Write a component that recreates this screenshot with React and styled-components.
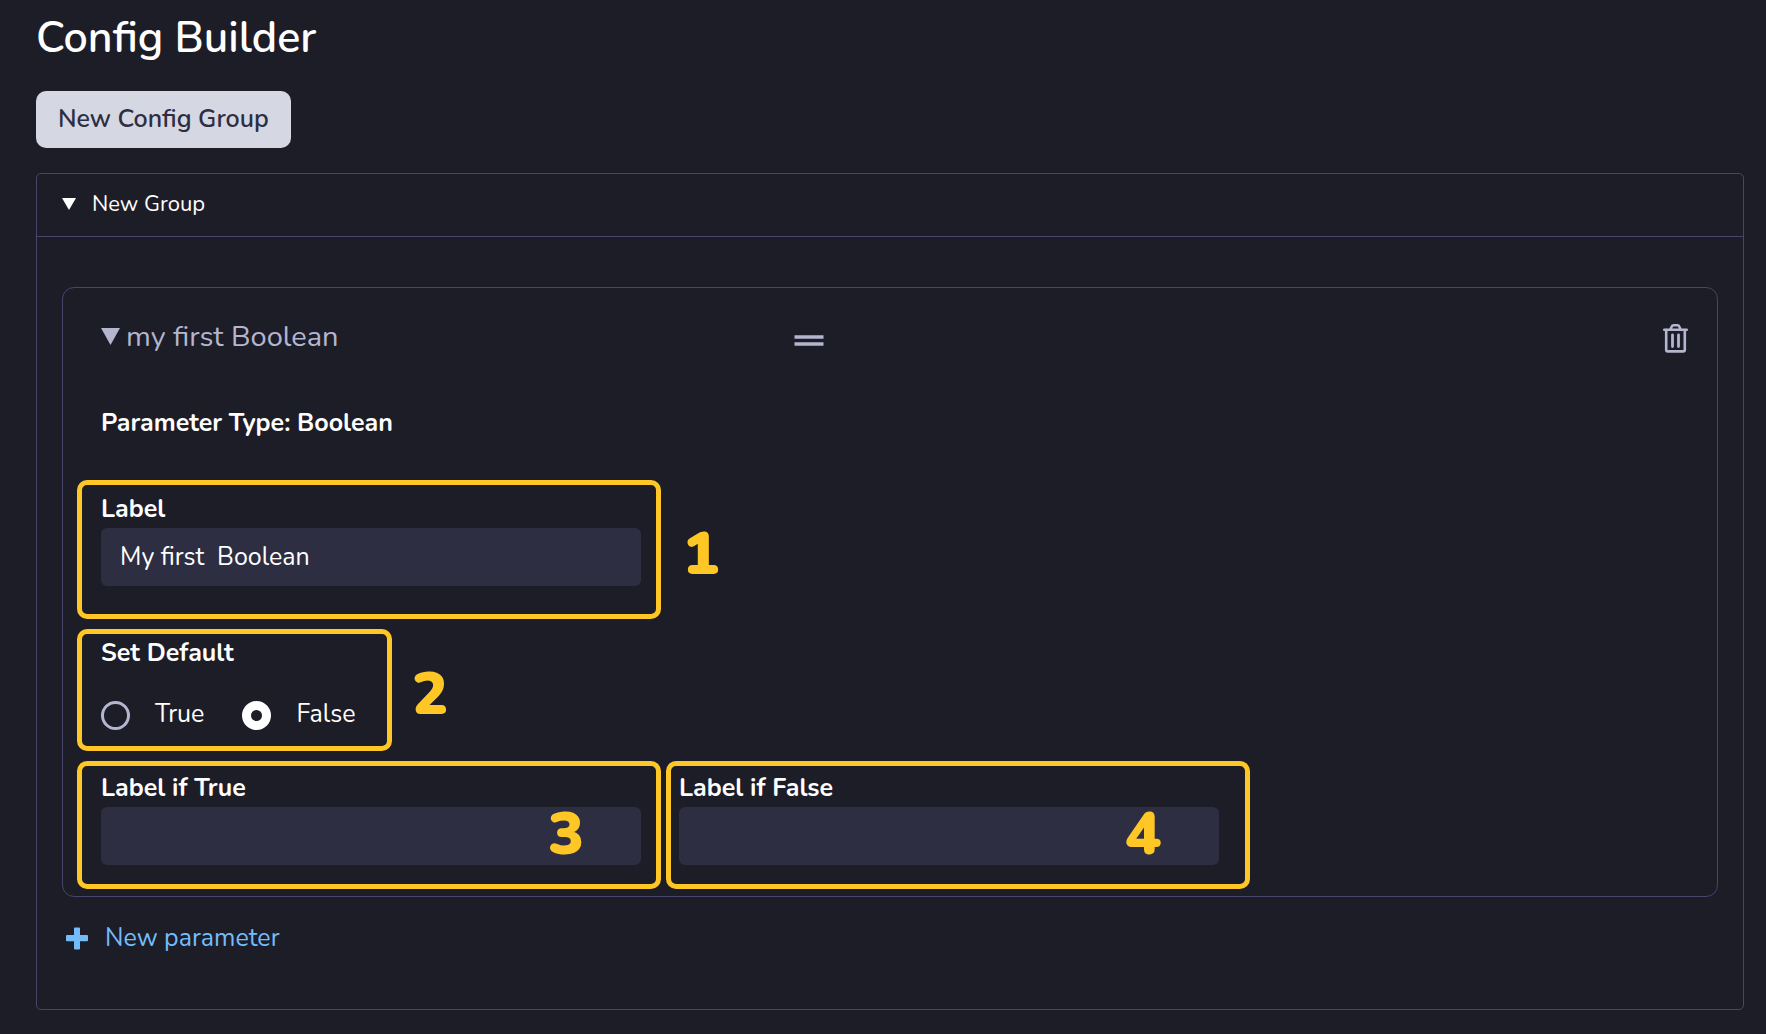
import React, { useState } from "react";
import styled, { createGlobalStyle } from "styled-components";

const GlobalStyle = createGlobalStyle`
  *, *::before, *::after { box-sizing: border-box; }
  body {
    margin: 0;
    background: #1d1d28;
    color: #ffffff;
    font-family: Nunito, Lato, "Open Sans", sans-serif;
    font-size: 25px;
    line-height: 32px;
  }
  button, input { font: inherit; color: inherit; }
`;

const Page = styled.main`
  padding: 8px 22px 24px 36px;
`;

const Title = styled.h1`
  margin: 0 0 23px;
  font-size: 43px;
  line-height: 60px;
  font-weight: 600;
`;

const PrimaryButton = styled.button`
  display: block;
  height: 57px;
  margin-bottom: 25px;
  padding: 0 22px 2px;
  border: 0;
  border-radius: 10px;
  background: #d5d7e3;
  color: #2e2e42;
  font-weight: 600;
`;

const Group = styled.section`
  border: 1px solid #47456a;
  border-radius: 5px;
`;

const GroupHeader = styled.button`
  display: flex;
  align-items: center;
  gap: 16px;
  width: 100%;
  height: 63px;
  padding: 0 25px 2px;
  border: 0;
  border-bottom: 1px solid #47456a;
  background: none;
  font-size: 22px;
`;

const GroupBody = styled.div`
  padding: 50px 25px 55px;
`;

const Card = styled.article`
  border: 1px solid #47456a;
  border-radius: 12px;
  padding: 32px 14px 7px;
`;

const CardHeader = styled.header`
  display: grid;
  grid-template-columns: 1fr auto 1fr;
  align-items: center;
  height: 36px;
  padding: 0 15px 0 24px;
  color: #b4b5ce;
`;

const CardToggle = styled.button`
  display: flex;
  align-items: center;
  gap: 6px;
  justify-self: start;
  padding: 0 0 3px;
  border: 0;
  background: none;
  font-size: 29px;
`;

const IconButton = styled.button`
  display: flex;
  justify-self: ${(p) => p.$align};
  margin-right: ${(p) => p.$gap || 0}px;
  padding: 0;
  border: 0;
  background: none;
`;

const TypeLine = styled.p`
  margin: 51px 24px 41px;
  font-weight: 700;
`;

const Fields = styled.div`
  display: flex;
  flex-direction: column;
  gap: 10px;
`;

const FieldRow = styled.div`
  display: flex;
  align-items: center;
  gap: ${(p) => p.$gap}px;
`;

const Callout = styled.div`
  position: relative;
  flex: 0 1 ${(p) => p.$width}px;
  padding: ${(p) => p.$padding};
  border: 5px solid #ffc726;
  border-radius: 10px;
`;

const Digit = styled.span`
  padding-top: 8px;
  color: #ffc726;
  font-size: 60px;
  line-height: 60px;
  font-weight: 900;
`;

const OverlayDigit = styled(Digit)`
  position: absolute;
  top: 30px;
  right: ${(p) => p.$right}px;
  pointer-events: none;
`;

const FieldLabel = styled.label`
  display: block;
  margin-bottom: 3px;
  font-weight: 700;
`;

const TextInput = styled.input`
  display: block;
  width: 100%;
  height: 58px;
  padding: 0 19px;
  border: 0;
  border-radius: 6px;
  background: #2e2e42;
`;

const RadioSet = styled.fieldset`
  margin: 0;
  padding: 0;
  border: 0;
`;

const Legend = styled.legend`
  padding: 0;
  font-weight: 700;
`;

const Options = styled.div`
  display: flex;
  gap: 38px;
  padding-top: 29px;
`;

const Option = styled.label`
  display: flex;
  align-items: center;
  gap: 25px;
`;

const Radio = styled.input`
  appearance: none;
  flex: none;
  width: 29px;
  height: 29px;
  margin: 2px 0 0;
  border: 3px solid #b4b5ce;
  border-radius: 50%;

  &:checked {
    border: 9px solid #ffffff;
  }
`;

const AddButton = styled.button`
  display: flex;
  align-items: center;
  gap: 17px;
  margin: 25px 0 0 4px;
  padding: 0;
  border: 0;
  background: none;
  color: #73bcfc;
`;

const Triangle = ({ width, height }) => (
  <svg width={width} height={height} viewBox="0 0 20 18" preserveAspectRatio="none" aria-hidden="true">
    <path d="M0 0h20L10 18z" fill="currentColor" />
  </svg>
);

const HandleIcon = () => (
  <svg width="30" height="30" viewBox="0 0 30 30" aria-hidden="true">
    <path d="M.5 12.2h29v3.600H.5zM.5 19.200h29v3.600H.5z" fill="currentColor" />
  </svg>
);

const TrashIcon = () => (
  <svg width="25" height="30" viewBox="0 0 25 30" fill="none" stroke="currentColor" strokeLinecap="round" strokeLinejoin="round" aria-hidden="true">
    <path d="M1.200 6.800h22.600M7.200 6.500l1.400-2.700Q9.200 2.200 10.600 2.200h3.800q1.400 0 2 1.600L17.800 6.500" strokeWidth="2.500" />
    <path d="M3.200 7v19.800q0 1.600 1.600 1.600h15.400q1.600 0 1.600-1.600V7" strokeWidth="2.600" />
    <path d="M9.500 12v11.500M15.500 12v11.500" strokeWidth="2.800" />
  </svg>
);

const PlusIcon = () => (
  <svg width="22" height="23" viewBox="0 0 22 23" aria-hidden="true">
    <path d="M9 .5h4q1 0 1 1V8h7q1 0 1 1v4.200q0 1-1 1h-7V21.500q0 1-1 1H9q-1 0-1-1V14.200H1q-1 0-1-1V9q0-1 1-1h7V1.500q0-1 1-1z" fill="currentColor" />
  </svg>
);

export default function App() {
  const [label, setLabel] = useState("My first  Boolean");
  const [value, setValue] = useState("false");
  const [ifTrue, setIfTrue] = useState("");
  const [ifFalse, setIfFalse] = useState("");

  return (
    <>
      <GlobalStyle />
      <Page>
        <Title>Config Builder</Title>
        <PrimaryButton type="button">New Config Group</PrimaryButton>
        <Group>
          <GroupHeader type="button" aria-expanded="true">
            <Triangle width={14} height={12} />
            New Group
          </GroupHeader>
          <GroupBody>
            <Card>
              <CardHeader>
                <CardToggle type="button" aria-expanded="true">
                  <Triangle width={19} height={17} />
                  my first Boolean
                </CardToggle>
                <IconButton type="button" aria-label="Reorder" $align="center" $gap={172}>
                  <HandleIcon />
                </IconButton>
                <IconButton type="button" aria-label="Delete" $align="end">
                  <TrashIcon />
                </IconButton>
              </CardHeader>
              <TypeLine>Parameter Type: Boolean</TypeLine>
              <Fields>
                <FieldRow $gap={22}>
                  <Callout $width={584} $padding="8px 15px 28px 19px">
                    <FieldLabel htmlFor="label">Label</FieldLabel>
                    <TextInput id="label" value={label} onChange={(e) => setLabel(e.target.value)} />
                  </Callout>
                  <Digit>1</Digit>
                </FieldRow>
                <FieldRow $gap={20}>
                  <Callout $width={315} $padding="3px 19px 16px">
                    <RadioSet>
                      <Legend>Set Default</Legend>
                      <Options>
                        <Option>
                          <Radio type="radio" name="default" checked={value === "true"} onChange={() => setValue("true")} />
                          True
                        </Option>
                        <Option>
                          <Radio type="radio" name="default" checked={value === "false"} onChange={() => setValue("false")} />
                          False
                        </Option>
                      </Options>
                    </RadioSet>
                  </Callout>
                  <Digit>2</Digit>
                </FieldRow>
                <FieldRow $gap={5}>
                  <Callout $width={584} $padding="6px 15px 19px 19px">
                    <FieldLabel htmlFor="if-true">Label if True</FieldLabel>
                    <TextInput id="if-true" value={ifTrue} onChange={(e) => setIfTrue(e.target.value)} />
                    <OverlayDigit $right={72}>3</OverlayDigit>
                  </Callout>
                  <Callout $width={584} $padding="6px 26px 19px 8px">
                    <FieldLabel htmlFor="if-false">Label if False</FieldLabel>
                    <TextInput id="if-false" value={ifFalse} onChange={(e) => setIfFalse(e.target.value)} />
                    <OverlayDigit $right={84}>4</OverlayDigit>
                  </Callout>
                </FieldRow>
              </Fields>
            </Card>
            <AddButton type="button">
              <PlusIcon />
              New parameter
            </AddButton>
          </GroupBody>
        </Group>
      </Page>
    </>
  );
}
